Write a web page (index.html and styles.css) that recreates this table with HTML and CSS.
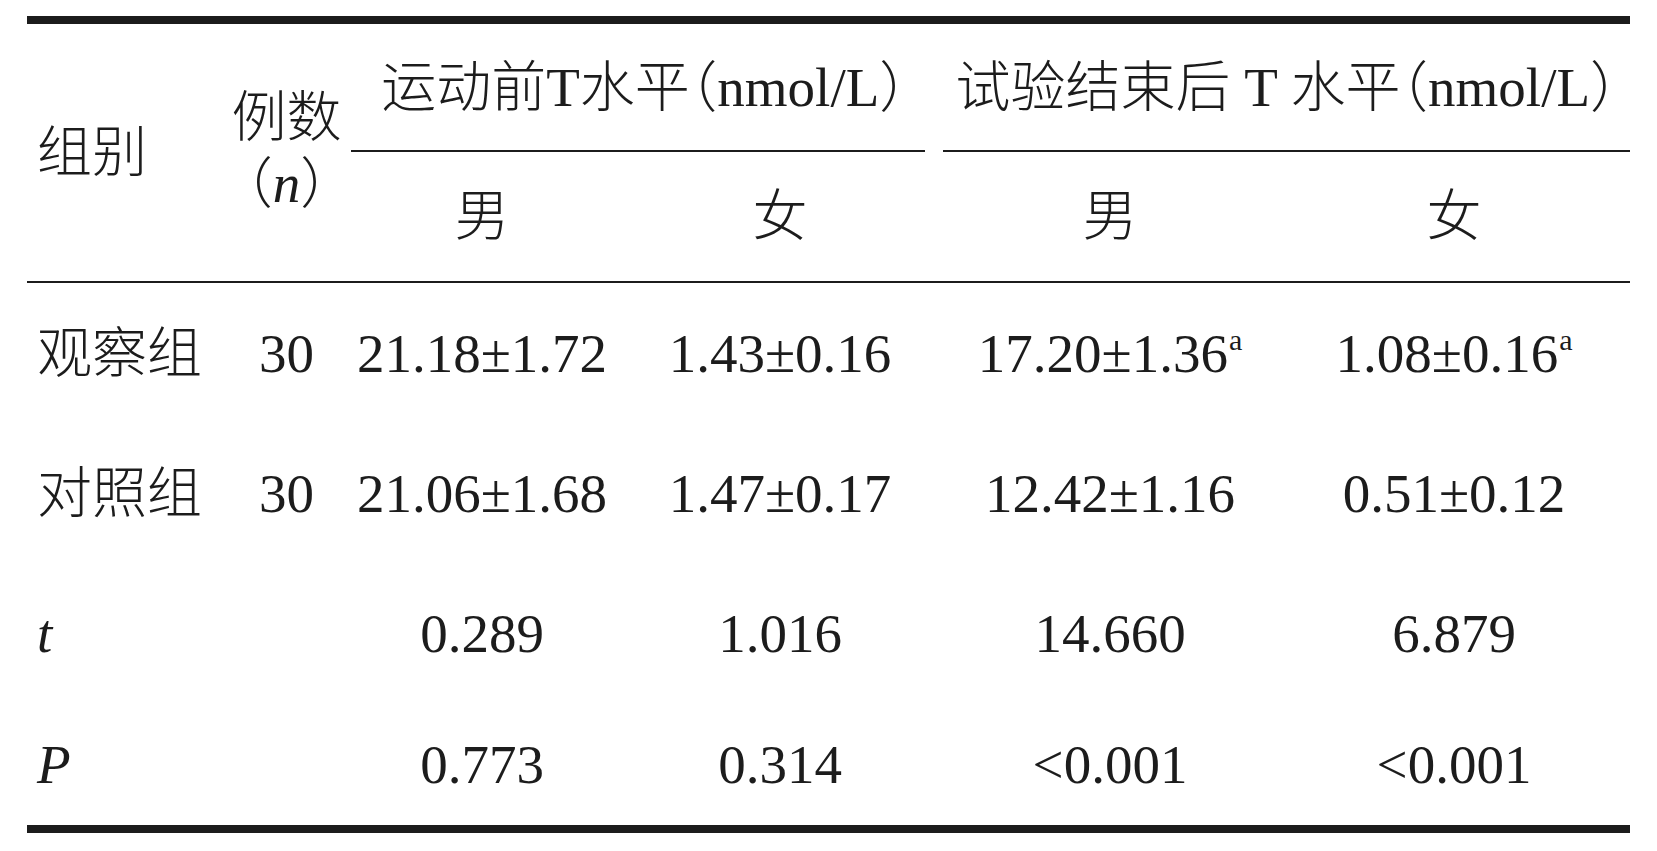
FILE: index.html
```html
<!DOCTYPE html>
<html lang="zh-CN">
<head>
<meta charset="utf-8">
<title>表</title>
<link rel="stylesheet" href="styles.css">
</head>
<body>
<div class="tbl">
  <div class="head">
    <div class="cell left rs2">组别</div>
    <div class="cell rs2 stack"><span>例数</span><span>（<i>n</i>）</span></div>
    <div class="cell grp grp1">运动前T水平（nmol/L）</div>
    <div class="cell grp grp2">试验结束后 T 水平（nmol/L）</div>
    <div class="cell">男</div>
    <div class="cell">女</div>
    <div class="cell">男</div>
    <div class="cell">女</div>
  </div>
  <div class="body">
    <div class="row">
      <div class="cell left">观察组</div>
      <div class="cell">30</div>
      <div class="cell">21.18±1.72</div>
      <div class="cell">1.43±0.16</div>
      <div class="cell"><span>17.20±1.36<sup class="sig">a</sup></span></div>
      <div class="cell"><span>1.08±0.16<sup class="sig">a</sup></span></div>
    </div>
    <div class="row">
      <div class="cell left">对照组</div>
      <div class="cell">30</div>
      <div class="cell">21.06±1.68</div>
      <div class="cell">1.47±0.17</div>
      <div class="cell">12.42±1.16</div>
      <div class="cell">0.51±0.12</div>
    </div>
    <div class="row">
      <div class="cell left"><i>t</i></div>
      <div class="cell"></div>
      <div class="cell">0.289</div>
      <div class="cell">1.016</div>
      <div class="cell">14.660</div>
      <div class="cell">6.879</div>
    </div>
    <div class="row last">
      <div class="cell left"><i>P</i></div>
      <div class="cell"></div>
      <div class="cell">0.773</div>
      <div class="cell">0.314</div>
      <div class="cell">&lt;0.001</div>
      <div class="cell">&lt;0.001</div>
    </div>
  </div>
</div>
</body>
</html>
```

FILE: styles.css
```css
html, body {
  margin: 0;
  background: #ffffff;
}

body {
  padding: 16px 27px;
  color: #1c1c1c;
  font-family: "Liberation Serif", "Noto Sans CJK SC", serif;
  font-size: 55px;
  font-weight: 300;
  line-height: 1;
  font-feature-settings: "halt";
}

.tbl {
  border-top: 8px solid #1c1c1c;
  border-bottom: 8px solid #1c1c1c;
}

.head,
.row {
  display: grid;
  grid-template-columns: 200px 119px 272px 324px 336px 352px;
}

.head {
  grid-template-rows: 128px 129px;
  border-bottom: 2px solid #1c1c1c;
}

.row {
  height: 140px;
}

.row.last {
  height: 122px;
}

.cell {
  display: flex;
  align-items: center;
  justify-content: center;
  white-space: nowrap;
}

.cell.left {
  justify-content: flex-start;
  padding-left: 10px;
}

.rs2 {
  grid-row: span 2;
}

.stack {
  flex-direction: column;
  line-height: 66px;
  padding-bottom: 4px;
}

.grp {
  border-bottom: 2px solid #1c1c1c;
  grid-column: span 2;
}

.grp1 {
  margin-left: 5px;
  margin-right: 17px;
  padding-left: 12px;
}

.grp2 {
  margin-left: 1px;
}

i {
  font-style: italic;
}

.sig {
  font-size: 30px;
  line-height: 0;
  vertical-align: 22px;
  margin-left: 1px;
}
```
